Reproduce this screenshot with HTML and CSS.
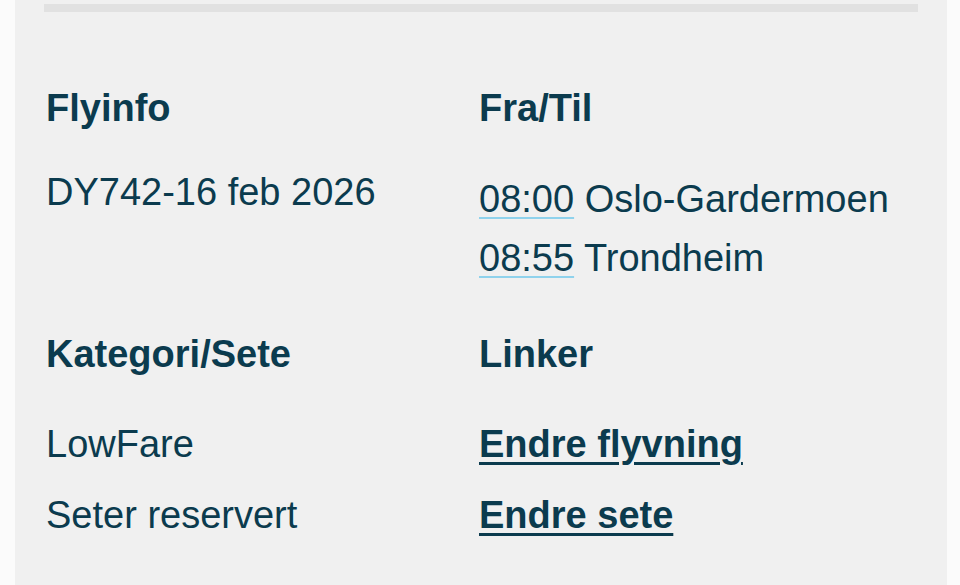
FILE: index.html
```html
<!DOCTYPE html>
<html lang="no">
<head>
<meta charset="utf-8">
<title>Flyinfo</title>
<link rel="stylesheet" href="styles.css">
</head>
<body>
<main class="panel">
  <div class="bar"></div>
  <div class="grid">
    <section class="cell">
      <h2>Flyinfo</h2>
      <ul class="vals">
        <li>DY742-16 feb 2026</li>
      </ul>
    </section>
    <section class="cell">
      <h2>Fra/Til</h2>
      <ul class="vals route">
        <li><time class="time">08:00</time> Oslo-Gardermoen</li>
        <li><time class="time">08:55</time> Trondheim</li>
      </ul>
    </section>
    <section class="cell">
      <h2>Kategori/Sete</h2>
      <ul class="vals lower">
        <li>LowFare</li>
        <li>Seter reservert</li>
      </ul>
    </section>
    <section class="cell">
      <h2>Linker</h2>
      <ul class="vals lower">
        <li><a class="link" href="#">Endre flyvning</a></li>
        <li><a class="link" href="#">Endre sete</a></li>
      </ul>
    </section>
  </div>
</main>
</body>
</html>
```

FILE: styles.css
```css
html, body {
  margin: 0;
  height: 100%;
}
body {
  background: #fbfbfb;
  font-family: "Liberation Sans", Arial, sans-serif;
  color: #0b3b4e;
  overflow: hidden;
}
.panel {
  box-sizing: border-box;
  margin-left: 15px;
  width: 932px;
  min-height: 100%;
  background: #f0f0f0;
  padding: 4px 31px 0;
}
.bar {
  height: 8px;
  margin: 0 -2px;
  background: #e1e1e1;
}
.grid {
  display: grid;
  grid-template-columns: 433px 1fr;
  row-gap: 52px;
  margin-top: 74px;
}
.cell h2 {
  margin: 0 0 40px;
  font-size: 38px;
  line-height: 44px;
  font-weight: 700;
}
.vals {
  list-style: none;
  margin: 0;
  padding: 0;
  font-size: 38px;
  line-height: 44px;
}
.route {
  padding-top: 7px;
}
.route li + li {
  margin-top: 15px;
}
.lower {
  padding-top: 6px;
}
.lower li + li {
  margin-top: 27px;
}
.time {
  text-decoration: underline;
  text-decoration-color: #8fd2ec;
  text-decoration-thickness: 2px;
  text-underline-offset: 5px;
}
.link {
  color: #0b3b4e;
  font-weight: 700;
  text-decoration: underline;
  text-decoration-thickness: 3px;
  text-underline-offset: 5px;
}
```
